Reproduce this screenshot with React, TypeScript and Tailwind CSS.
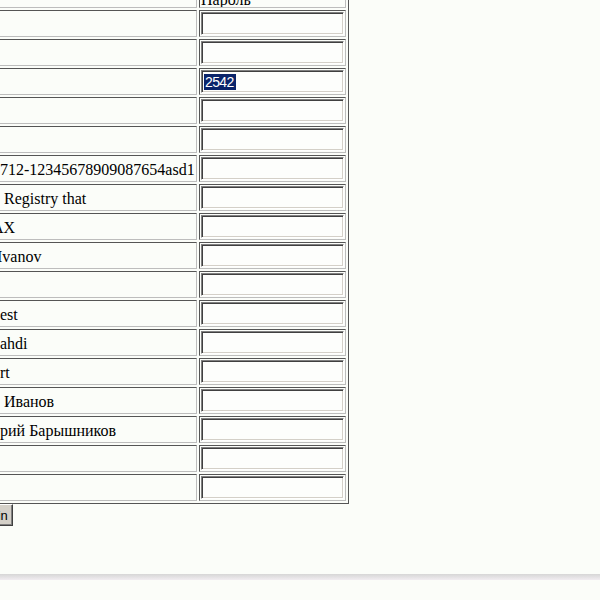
import React from "react";

const serif = { fontFamily: '"Liberation Serif", "Times New Roman", serif' };

type Row = { text: string; shift?: string };

const rows: Row[] = [
  { text: "" },
  { text: "" },
  { text: "" },
  { text: "" },
  { text: "" },
  { text: "712-12345678909087654asd1" },
  { text: "\u00a0Registry that" },
  { text: "AX", shift: "-ml-[8px]" },
  { text: "Ivanov", shift: "-ml-[3px]" },
  { text: "" },
  { text: "est" },
  { text: "ahdi" },
  { text: "rt" },
  { text: "\u00a0Иванов" },
  { text: "рий Барышников" },
  { text: "" },
  { text: "" },
];

const cell =
  "h-[27px] border border-t-[#555555] border-l-[#555555] border-b-[#bdbdbd] border-r-[#bdbdbd] px-[1px] pb-[1px] flex overflow-hidden whitespace-nowrap";

function FakeInput({ selected }: { selected?: string }) {
  return (
    <div
      className="w-[143px] h-[23px] bg-[#fdfefc] border border-t-[#808080] border-l-[#808080] border-b-[#ffffff] border-r-[#ffffff] shadow-[inset_1px_1px_0_#404040,inset_-1px_-1px_0_#d4d0c8] flex items-center pl-[2px] text-[14px] tracking-[-0.6px]"
      style={{ fontFamily: '"Liberation Sans", Arial, sans-serif' }}
      role="textbox"
    >
      {selected ? (
        <span className="inline-block h-[16px] leading-[16px] bg-[#0a246a] text-white pl-[1px] pr-[2px]">{selected}</span>
      ) : null}
    </div>
  );
}

export default function App() {
  return (
    <div className="min-h-screen w-full overflow-hidden bg-[#fbfdf9] text-black" style={serif}>
      <div
        role="table"
        className="-ml-[5px] -mt-[22px] w-[354px] grid grid-cols-[199px_147px] gap-[2px] p-[2px] border border-t-[#c0c0c0] border-l-[#c0c0c0] border-r-[#555555] border-b-[#555555] text-[16px] leading-[18px]"
      >
        <div className={`${cell} pt-[1px]`}></div>
        <div className={`${cell} pt-[1px] items-end`}>
          <span className="inline-block translate-y-[3px]">Пароль</span>
        </div>
        {rows.map((r, i) => (
          <React.Fragment key={i}>
            <div className={`${cell} pt-[3px] items-center`}>
              {r.text ? <span className={`inline-block ${r.shift ?? ""}`}>{r.text}</span> : null}
            </div>
            <div className={`${cell} pt-[1px] items-center`}>
              <FakeInput selected={i === 2 ? "2542" : undefined} />
            </div>
          </React.Fragment>
        ))}
      </div>
      <div className="flex">
        <button
          className="-ml-[29px] h-[22px] px-[4px] bg-[#d4d0c8] border border-t-[#ffffff] border-l-[#ffffff] border-b-[#404040] border-r-[#404040] shadow-[inset_-1px_-1px_0_#808080] text-[13px] leading-none"
          style={{ fontFamily: '"Liberation Sans", Arial, sans-serif' }}
        >
          Login
        </button>
      </div>
      <div className="mt-[48px] h-[6px] w-full bg-gradient-to-b from-[#d6d6d6] to-[#f1edf1]" />
    </div>
  );
}
